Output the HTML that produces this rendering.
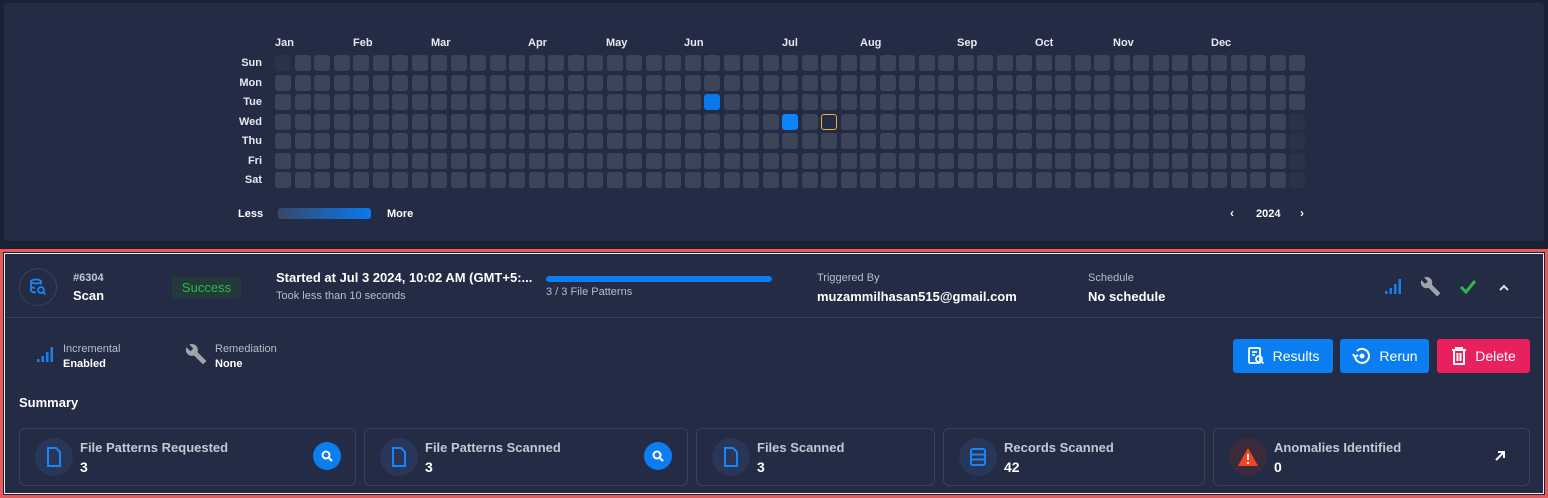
<!DOCTYPE html>
<html><head><meta charset="utf-8"><style>
*{box-sizing:border-box;margin:0;padding:0}
body{width:1548px;height:498px;background:#1a2036;font-family:"Liberation Sans",sans-serif;color:#fff;position:relative;overflow:hidden}
.abs{position:absolute}
.panel{left:4px;top:3px;width:1540px;height:238px;background:#232b45;border-radius:4px}
.c{position:absolute;width:16px;height:16px;border-radius:3px;background:#3c4459}
.m{position:absolute;top:37px;font-size:11px;font-weight:bold;color:#e8eaf0}
.d{position:absolute;left:220px;width:42px;text-align:right;font-size:11px;font-weight:bold;color:#e8eaf0}
.outer{left:0px;top:249px;width:1548px;height:249px;border:3px solid #e85a5a;}
.inner{left:4px;top:253px;width:1540px;height:241px;border:1px solid #eee;background:#232b45}
.lbl{font-size:11px;color:#b8bdca}
.val{font-size:13px;font-weight:bold;color:#fff}
.btn{position:absolute;top:339px;height:34px;border-radius:3px;color:#fff;font-size:14px;display:flex;align-items:center;justify-content:center;gap:8px}
.card{position:absolute;top:428px;height:58px;border:1px solid #3a4259;border-radius:6px}
.card .ic{position:absolute;left:15px;top:9px;width:38px;height:38px;border-radius:50%;background:#2a3657;display:flex;align-items:center;justify-content:center}
.card .t{position:absolute;left:60px;top:11px;font-size:13px;font-weight:bold;color:#c3c8d4}
.card .v{position:absolute;left:60px;top:30px;font-size:14px;font-weight:bold}
.srch{position:absolute;top:13px;width:28px;height:28px;border-radius:50%;background:#0d7ef0;display:flex;align-items:center;justify-content:center}
</style></head><body>
<div class="abs panel"></div>
<div id="g"></div>
<div class="m" style="left:275px">Jan</div><div class="m" style="left:353px">Feb</div><div class="m" style="left:431px">Mar</div><div class="m" style="left:528px">Apr</div><div class="m" style="left:606px">May</div><div class="m" style="left:684px">Jun</div><div class="m" style="left:782px">Jul</div><div class="m" style="left:860px">Aug</div><div class="m" style="left:957px">Sep</div><div class="m" style="left:1035px">Oct</div><div class="m" style="left:1113px">Nov</div><div class="m" style="left:1211px">Dec</div>
<div class="d" style="top:57px">Sun</div><div class="d" style="top:77px">Mon</div><div class="d" style="top:96px">Tue</div><div class="d" style="top:116px">Wed</div><div class="d" style="top:135px">Thu</div><div class="d" style="top:155px">Fri</div><div class="d" style="top:174px">Sat</div>
<div class="abs" style="left:238px;top:208px;font-size:11px;font-weight:bold">Less</div>
<div class="abs" style="left:278px;top:208px;width:93px;height:11px;border-radius:3px;background:linear-gradient(90deg,#38476a,#0a78ee)"></div>
<div class="abs" style="left:387px;top:208px;font-size:11px;font-weight:bold">More</div>
<div class="abs" style="left:1230px;top:206px;font-size:12px;font-weight:bold">‹</div>
<div class="abs" style="left:1256px;top:208px;font-size:11px;font-weight:bold">2024</div>
<div class="abs" style="left:1300px;top:206px;font-size:12px;font-weight:bold">›</div>

<div class="abs outer"></div>
<div class="abs inner"></div>
<div class="abs" style="left:6px;top:317px;width:1536px;height:1px;background:#3a4259"></div>
<div class="abs" style="left:19px;top:268px;width:38px;height:38px;border-radius:50%;border:1px solid #3a4259;display:flex;align-items:center;justify-content:center">
<svg width="18" height="18" viewBox="0 0 18 18" fill="none" stroke="#1a85f5" stroke-width="1.8"><ellipse cx="7" cy="3.5" rx="5" ry="2"/><path d="M2 3.5v9c0 1 2 2 5 2M2 8c0 1 2 2 4 2M12 3.5v3"/><circle cx="12" cy="12" r="3"/><path d="M14 14l2.5 2.5"/></svg></div>
<div class="abs" style="left:73px;top:272px;font-size:11px;font-weight:bold;color:#c3c8d4">#6304</div>
<div class="abs" style="left:73px;top:288px;font-size:13px;font-weight:bold">Scan</div>
<div class="abs" style="left:172px;top:277px;width:69px;height:21px;background:#233a3a;border-radius:2px;color:#2fb84a;font-size:13px;display:flex;align-items:center;justify-content:center">Success</div>
<div class="abs" style="left:276px;top:270px;font-size:13px;font-weight:bold">Started at Jul 3 2024, 10:02 AM (GMT+5:...</div>
<div class="abs" style="left:276px;top:290px;font-size:11px;color:#b8bdca">Took less than 10 seconds</div>
<div class="abs" style="left:546px;top:276px;width:226px;height:6px;border-radius:3px;background:#0d7ef0"></div>
<div class="abs" style="left:546px;top:286px;font-size:11px;color:#b8bdca">3 / 3 File Patterns</div>
<div class="abs lbl" style="left:817px;top:272px">Triggered By</div>
<div class="abs val" style="left:817px;top:289px">muzammilhasan515@gmail.com</div>
<div class="abs lbl" style="left:1088px;top:272px">Schedule</div>
<div class="abs val" style="left:1088px;top:289px">No schedule</div>
<svg class="abs" style="left:1384px;top:278px" width="20" height="18"><g fill="#1a7ef0"><rect x="1" y="13" width="2.5" height="3"/><rect x="5.5" y="10" width="2.5" height="6"/><rect x="10" y="6" width="2.5" height="10"/><rect x="14.5" y="1" width="2.5" height="15"/></g></svg>
<svg class="abs" style="left:1420px;top:276px" width="21" height="21" viewBox="0 0 24 24"><path fill="#a0a4ad" d="M22.7 19l-9.1-9.1c.9-2.3.4-5-1.5-6.9-2-2-5-2.4-7.4-1.3L9 6 6 9 1.6 4.7C.4 7.1.9 10.1 2.9 12.1c1.9 1.9 4.6 2.4 6.9 1.5l9.1 9.1c.4.4 1 .4 1.4 0l2.3-2.3c.5-.4.5-1.1.1-1.4z"/></svg>
<svg class="abs" style="left:1459px;top:279px" width="18" height="16"><path d="M2 8l5 5 9-11" stroke="#2fb84a" stroke-width="3" fill="none"/></svg>
<svg class="abs" style="left:1498px;top:283px" width="12" height="8"><path d="M2 7l4-4 4 4" stroke="#ddd" stroke-width="2" fill="none"/></svg>

<svg class="abs" style="left:36px;top:346px" width="18" height="18"><g fill="#1a7ef0"><rect x="1" y="13" width="2.5" height="3"/><rect x="5.5" y="10" width="2.5" height="6"/><rect x="10" y="6" width="2.5" height="10"/><rect x="14.5" y="1" width="2.5" height="15"/></g></svg>
<div class="abs lbl" style="left:63px;top:343px">Incremental</div>
<div class="abs" style="left:63px;top:358px;font-size:11px;font-weight:bold">Enabled</div>
<svg class="abs" style="left:185px;top:343px" width="22" height="22" viewBox="0 0 24 24"><path fill="#a0a4ad" d="M22.7 19l-9.1-9.1c.9-2.3.4-5-1.5-6.9-2-2-5-2.4-7.4-1.3L9 6 6 9 1.6 4.7C.4 7.1.9 10.1 2.9 12.1c1.9 1.9 4.6 2.4 6.9 1.5l9.1 9.1c.4.4 1 .4 1.4 0l2.3-2.3c.5-.4.5-1.1.1-1.4z"/></svg>
<div class="abs lbl" style="left:215px;top:343px">Remediation</div>
<div class="abs" style="left:215px;top:358px;font-size:11px;font-weight:bold">None</div>
<div class="btn" style="left:1233px;width:100px;background:#0a7ef0"><svg width="18" height="20" fill="none" stroke="#fff" stroke-width="1.8"><rect x="2" y="2" width="11" height="15" rx="1"/><path d="M5 6h5M5 9h3"/><circle cx="12" cy="13" r="3"/><path d="M14 15l2.5 2.5"/></svg>Results</div>
<div class="btn" style="left:1340px;width:89px;background:#0a7ef0"><svg width="20" height="20" fill="none" stroke="#fff" stroke-width="2"><path d="M4 10a7 7 0 1 0 2-5"/><path d="M2 8l2 3 3-2"/><circle cx="11" cy="10" r="1.5" fill="#fff"/></svg>Rerun</div>
<div class="btn" style="left:1437px;width:93px;background:#e8205e"><svg width="16" height="20" fill="none" stroke="#fff" stroke-width="2"><path d="M1 4h14M5 4V2h6v2M3 4v14h10V4M6.5 7v8M9.5 7v8"/></svg>Delete</div>
<div class="abs" style="left:19px;top:395px;font-size:13px;font-weight:bold">Summary</div>

<div class="card" style="left:19px;width:337px"><div class="ic"><svg width="16" height="20" fill="none" stroke="#1a85f5" stroke-width="2"><path d="M2 1h8l4 4v14H2z"/></svg></div><div class="t">File Patterns Requested</div><div class="v">3</div><div class="srch" style="left:293px"><svg width="12" height="12" fill="none" stroke="#fff" stroke-width="2"><circle cx="5" cy="5" r="3.5"/><path d="M8 8l3 3"/></svg></div></div>
<div class="card" style="left:364px;width:324px"><div class="ic"><svg width="16" height="20" fill="none" stroke="#1a85f5" stroke-width="2"><path d="M2 1h8l4 4v14H2z"/></svg></div><div class="t">File Patterns Scanned</div><div class="v">3</div><div class="srch" style="left:279px"><svg width="12" height="12" fill="none" stroke="#fff" stroke-width="2"><circle cx="5" cy="5" r="3.5"/><path d="M8 8l3 3"/></svg></div></div>
<div class="card" style="left:696px;width:239px"><div class="ic"><svg width="16" height="20" fill="none" stroke="#1a85f5" stroke-width="2"><path d="M2 1h8l4 4v14H2z"/></svg></div><div class="t">Files Scanned</div><div class="v">3</div></div>
<div class="card" style="left:943px;width:262px"><div class="ic"><svg width="16" height="18" fill="none" stroke="#1a85f5" stroke-width="2"><rect x="1" y="1" width="14" height="16" rx="2"/><path d="M1 6.5h14M1 11.5h14"/></svg></div><div class="t">Records Scanned</div><div class="v">42</div></div>
<div class="card" style="left:1213px;width:317px"><div class="ic" style="background:#3a2c3c"><svg width="22" height="20"><path d="M11 1L21 19H1z" fill="#f5441f"/><path d="M11 7v6M11 15v2" stroke="#fff" stroke-width="2"/></svg></div><div class="t">Anomalies Identified</div><div class="v">0</div><svg style="position:absolute;left:280px;top:21px" width="12" height="12" fill="none" stroke="#fff" stroke-width="2"><path d="M2 10L10 2M4 2h6v6"/></svg></div>

<script>
var g=document.getElementById('g'),h='';
for(var c=0;c<53;c++)for(var r=0;r<7;r++){
var x=275+c*19.5,y=55+r*19.5,s='';
if((c==0&&r==0)||(c==52&&r>=3))s='background:#2a324a';
if(c==22&&r==2)s='background:#0a78ee';
if(c==26&&r==3)s='background:#0a84ff';
if(c==28&&r==3)s='background:transparent;border:1px solid #f0b132';
h+='<div class="c" style="left:'+x+'px;top:'+y+'px;'+s+'"></div>';}
g.innerHTML=h;
</script>
</body></html>
